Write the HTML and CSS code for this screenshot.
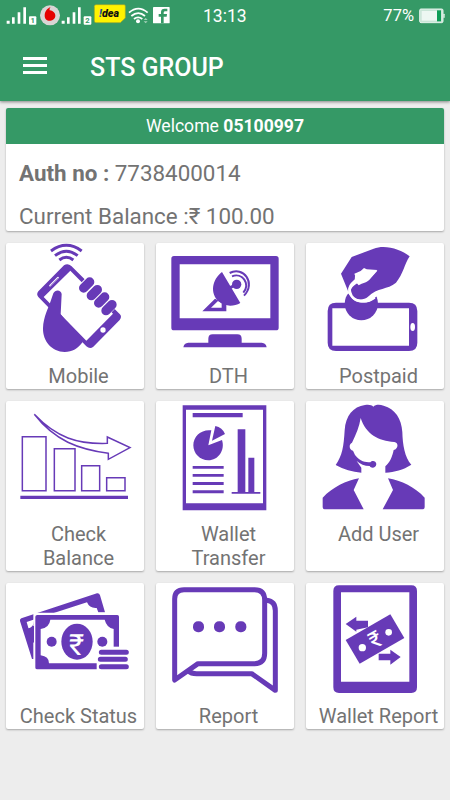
FILE: index.html
```html
<!DOCTYPE html>
<html lang="en">
<head>
  <meta charset="UTF-8">
  <meta name="viewport" content="width=device-width, initial-scale=1">
  <title>STS GROUP</title>
  <link rel="stylesheet" href="styles.css">
</head>
<body>
  <header class="header">
    <div class="status-bar">
      <svg class="status-icons" viewBox="0 0 540 96">
        <!-- sim 1 signal -->
        <g class="white">
          <path d="M20 62h9v9h-9zM36 52h8v19h-8zM53 37h8v34h-8zM70 22h8v49h-8z"/>
          <rect x="87" y="49" width="22" height="25" rx="3"/>
          <path d="M185 62h9v9h-9zM201 52h8v19h-8zM218 37h8v34h-8zM234 22h8v49h-8z"/>
          <rect x="251" y="49" width="23" height="25" rx="3"/>
        </g>
        <text class="sim" x="98" y="70">1</text>
        <text class="sim" x="262" y="70">2</text>
        <!-- operator badges -->
        <circle cx="150" cy="46" r="30" fill="#d9d5d5"/>
        <path d="M152 21c-3 3-4 6-3 10 12 2 18 9 17 18-1 8-8 14-17 13-9 0-15-6-15-15 0-13 9-23 18-26z" fill="#e60000"/>
        <path d="M288 14h84q4 0 4 4v36l-15 14h-73q-5 0-5-5v-44q0-5 5-5z" fill="#fff200" stroke="#9aa52d" stroke-width="2"/>
        <text class="operator" x="297" y="52" textLength="60" lengthAdjust="spacingAndGlyphs"><tspan fill="#1f4e9c">!</tspan>dea</text>
        <!-- wifi -->
        <g fill="none" stroke="#fff" stroke-width="5.5">
          <path d="M387 38q28-24 56 0M394 48q21-17 41 0M402 57q12-10 25 0"/>
        </g>
        <circle class="white" cx="414" cy="64" r="6"/>
        <path d="M431 60l6-6 6 6zM431 64l6 6 6-6z" fill="#a5d1b9"/>
        <!-- facebook -->
        <rect class="white" x="459" y="21" width="50" height="49" rx="2"/>
        <path d="M483 70V50h-7v-8h7v-6q0-10 11-10h8v8h-6q-5 0-5 4v4h10l-1 8h-9v20z" fill="#359966"/>
      </svg>
      <span class="time">13:13</span>
      <span class="battery-text">77%</span>
      <svg class="battery" viewBox="0 0 78 48">
        <rect x="2" y="3" width="70" height="41" rx="4" fill="#c9e5d7" stroke="#e4f3eb" stroke-width="3"/>
        <rect x="8" y="9" width="46" height="29" fill="#edf7f2"/>
        <rect x="54" y="7" width="12" height="33" fill="#0e9d57"/>
        <rect x="73" y="17" width="4" height="13" rx="2" fill="#e4f3eb"/>
      </svg>
    </div>
    <div class="toolbar">
      <button class="menu-button" aria-label="Menu"><span></span><span></span><span></span></button>
      <h1>STS GROUP</h1>
    </div>
  </header>

  <main>
    <section class="account card">
      <div class="welcome">Welcome <b>05100997</b></div>
      <p><b>Auth no :</b> 7738400014</p>
      <p>Current Balance :₹ 100.00</p>
    </section>

    <section class="menu">
      <a class="item card">
        <svg viewBox="18 14 414 345">
          <g class="line" stroke-width="9">
            <path d="M153 38q46-34 92 0M165 52q34-26 68 0M178 65q21-16 42 0"/>
          </g>
          <path fill-rule="evenodd" d="M192 81q11-7 22 2l145 144q8 8 0 18l-79 80q-10 9-21-1L115 176q-7-8 0-17zM211 97L131 176 259 307 339 226z"/>
          <circle class="white" cx="309" cy="275" r="8"/>
          <path d="M150 142l24-24" stroke="#fff" stroke-width="5" stroke-linecap="round"/>
          <path d="M151 142l23-23" stroke="#673ab7" stroke-width="1.5"/>
          <path d="M160 165c5-12 23-12 25 2l-3 61 66 83c-14 20-31 30-54 30-38 0-66-32-65-71 1-35 18-65 22-79z"/>
          <g stroke="#fff" stroke-width="33" stroke-linecap="round">
            <path d="M251 149l18-19M273 172l18-19M296 194l18-19M318 216l18-19"/>
          </g>
          <g stroke="#673ab7" stroke-width="28" stroke-linecap="round">
            <path d="M251 149l18-18M274 172l18-18M296 194l18-18M318 217l18-18"/>
          </g>
        </svg>
        <span>Mobile</span>
      </a>

      <a class="item card">
        <svg viewBox="18 14 414 345">
          <path fill-rule="evenodd" d="M72 53h306q8 0 8 8v207q0 8-8 8H72q-8 0-8-8V61q0-8 8-8zM89 78v162h272V78z"/>
          <path d="M100 327q2-13 15-14h60v-12q0-13 13-13h74q13 0 13 13v12h60q13 1 15 14z"/>
          <path d="M216 101c-31 23-36 65-10 88 19 17 45 16 65 5z"/>
          <circle cx="260" cy="138" r="14"/>
          <path d="M236 150l20-10" stroke="#673ab7" stroke-width="9"/>
          <path fill-rule="evenodd" d="M195 181l34 17v21h-72zM204 188l-21 20h32v-14z"/>
          <g class="line" stroke-width="6">
            <path d="M239 104c41-22 80 30 43 68M246 114c31-12 56 22 34 49"/>
          </g>
        </svg>
        <span>DTH</span>
      </a>

      <a class="item card">
        <svg viewBox="18 14 414 345">
          <path fill-rule="evenodd" d="M108 193h219q25 0 25 25v95q0 25-25 25H108q-25 0-25-25v-95q0-25 25-25zM97 210v112h230V210z"/>
          <ellipse class="white" cx="338" cy="266" rx="7" ry="12"/>
          <circle cx="184" cy="196" r="50"/>
          <path d="M123 140h120v26l-15 9c-18 23-62 24-75 0z" fill="#fff"/>
          <path d="M145 160L123 106l32-50 66-25c34-14 83 2 108 23-16 24-19 53-41 79-26 22-55 13-84 42-15 14-48 10-52-10-2-16 10-27 30-34 10-4 23-1 29-11l21-25-32-2-8-4-10 9-19 8 8 22c-17 8-28 15-26 32z"/>
          <path d="M192 91l8 4 32 2-24 27c-8 9-20 9-32 17l-12-14 1-14 20-9z" fill="#fff"/>
          <path d="M171 123c-23 17-27 29-17 49 13 21 48 22 70 5" fill="none" stroke="#fff" stroke-width="8"/>
        </svg>
        <span>Postpaid</span>
      </a>

      <a class="item card">
        <svg viewBox="18 14 414 345">
          <g class="line" stroke-width="4.5">
            <path d="M67 121h71v162H67zM163 157h62v126h-62zM245 208h54v75h-54zM320 244h55v39h-55z"/>
            <path d="M103 54c66 70 130 90 219 87v-19l68 32-65 35v-18c-90-13-160-37-222-117z"/>
          </g>
          <path d="M61 298h323v10H61z"/>
        </svg>
        <span>Check<br>Balance</span>
      </a>

      <a class="item card">
        <svg viewBox="18 14 414 345">
          <path fill-rule="evenodd" d="M98 27h251v315H98zM108 40v281h231V40z"/>
          <path d="M128 50h150v13H128zM128 209h93v8h-93zM128 233h93v8h-93zM128 257h93v9h-93zM128 282h93v9h-93zM263 99h23v189h-23zM295 184h18v104h-18zM245 287h86v5h-86z"/>
          <path d="M184 102c-29-4-54 17-54 45 0 25 20 45 45 45 30 0 51-31 41-61l-41 16z"/>
          <path d="M196 89q21 4 29 24l-39 20z"/>
        </svg>
        <span>Wallet<br>Transfer</span>
      </a>

      <a class="item card">
        <svg viewBox="18 14 414 345">
          <path d="M107 206c20-28 24-55 27-104 3-44 25-71 61-76 12-2 20 0 25 5 6-6 18-7 31-3 34 10 54 38 56 79 1 38 7 76 27 98-25 16-50 22-78 24v-19c14-12 21-29 25-49 15-3 15-23 2-24-48-3-85-23-101-72-4 26-13 48-26 74-10 4-9 21 3 24l6 13c16 20 31 22 46 22 4-6 17-6 18 5-1 13-16 14-20 6-15 0-29-6-39-15l14 20v15c-27-3-53-9-77-23z"/>
          <path d="M177 246c-38 7-79 26-109 58v29q0 6 6 6h117l-30-58zM264 246c40 7 81 26 110 58v29q0 6-6 6H248l31-58z"/>
        </svg>
        <span>Add User</span>
      </a>

      <a class="item card">
        <svg viewBox="18 14 414 345">
          <path fill-rule="evenodd" d="M64 120L291 45q7-1 9 6l15 51h-20l-5-13q-21 2-29-17L122 117 80 131l6 21 14-10v100h-4L60 128q-1-6 4-8z"/>
          <path d="M84 150q17-1 18-24v67q-7 0-9-14z"/>
          <path d="M100 103h254v40H100z" fill="#fff"/>
          <path fill-rule="evenodd" d="M112 110h240q5 0 5 5v153q0 5-5 5H112q-6 0-6-5V115q0-5 6-5zM151 124q-3 24-29 28v79q25 3 25 24h194V152q-21-4-27-28z"/>
          <path d="M290 205h74v73h-74z" fill="#fff"/>
          <circle cx="155" cy="190" r="15"/>
          <circle cx="307" cy="190" r="15"/>
          <ellipse cx="231" cy="190" rx="47" ry="54"/>
          <text class="rupee" x="230" y="229">₹</text>
          <g stroke="#673ab7" stroke-width="15" stroke-linecap="round">
            <path d="M304 222h75M301 243h75M304 265h75"/>
          </g>
        </svg>
        <span>Check Status</span>
      </a>

      <a class="item card">
        <svg viewBox="18 14 414 345">
          <g class="line" stroke-width="15" stroke-linejoin="round">
            <path d="M102 34h212q30 0 30 31v160q0 31-30 31H144l-70 49V62q0-28 28-28z"/>
            <path d="M350 66q26 3 26 31v239l-71-50H140q-17 0-24-8"/>
          </g>
          <rect x="129" y="129" width="33" height="33" rx="15"/>
          <rect x="192" y="129" width="33" height="33" rx="15"/>
          <rect x="256" y="129" width="33" height="33" rx="15"/>
        </svg>
        <span>Report</span>
      </a>

      <a class="item card">
        <svg viewBox="18 14 414 345">
          <path fill-rule="evenodd" d="M117 21h217q17 0 17 17v289q0 17-17 17H117q-17 0-17-17V38q0-17 17-17zM123 42v268h205V42z"/>
          <path d="M137 185l134-77 42 71-134 77z"/>
          <path d="M137 137l32-22v12h35v20l-35 7v6zM302 236l-31-22v12h-35v20h35v13z"/>
          <circle class="white" cx="187" cy="208" r="11"/>
          <circle class="white" cx="266" cy="162" r="10"/>
          <text class="rupee small" transform="translate(238 204) rotate(-30)">₹</text>
        </svg>
        <span>Wallet Report</span>
      </a>
    </section>
  </main>
</body>
</html>
```

FILE: styles.css
```css
* {
  box-sizing: border-box;
}
body {
  margin: 0;
  min-height: 800px;
  background-color: #ededed;
  color: #737373;
  font-family: Roboto, "Liberation Sans", sans-serif;
}
.header {
  height: 101px;
  background-color: #359966;
  color: #fff;
  box-shadow: 0 1px 3px rgba(0, 0, 0, 0.45);
}
.status-bar {
  display: flex;
  align-items: center;
  height: 32px;
}
.status-icons {
  width: 180px;
  height: 32px;
}
.time {
  margin-left: 23px;
  font-size: 17.5px;
}
.battery-text {
  margin-left: auto;
  margin-right: 5px;
  margin-top: -2px;
  font-size: 16.5px;
}
.battery {
  width: 26px;
  height: 16px;
  margin-right: 5px;
}
.toolbar {
  display: flex;
  align-items: center;
  height: 69px;
  padding: 2px 0 0 23px;
}
.menu-button {
  display: flex;
  flex-direction: column;
  gap: 4px;
  width: 24px;
  margin-top: -4px;
  padding: 0;
  border: none;
  background: none;
}
.menu-button span {
  width: 24px;
  height: 3px;
  background-color: #fff;
}
h1 {
  margin: 0 0 0 43px;
  font-size: 25px;
  font-weight: 500;
}
main {
  padding: 6.5px 6px 0;
}
.card {
  background-color: #fff;
  border-radius: 2px;
  box-shadow: 0 1px 2px rgba(0, 0, 0, 0.3);
}
.account {
  height: 123px;
  overflow: hidden;
}
.welcome {
  height: 36px;
  background-color: #359966;
  color: #fff;
  font-size: 17.6px;
  line-height: 37px;
  text-align: center;
}
.account p {
  margin: 0;
  padding-left: 13px;
  font-size: 22.4px;
  line-height: 27px;
}
.account p:nth-of-type(1) {
  margin: 16px 0;
}
.menu {
  display: grid;
  grid-template-columns: repeat(3, 138px);
  gap: 12px;
  margin-top: 12px;
}
.item {
  display: flex;
  flex-direction: column;
  padding-bottom: 7px;
  font-size: 20px;
  line-height: 24px;
  text-align: center;
}
.item svg {
  display: block;
  width: 138px;
  height: 115px;
  fill: #673ab7;
}
.item span {
  margin-top: 6px;
  margin-bottom: -6px;
  padding-left: 7px;
}
.item .line {
  fill: none;
  stroke: #673ab7;
}
.white {
  fill: #fff;
}
.sim {
  fill: #359966;
  font-size: 23px;
  font-weight: 700;
  text-anchor: middle;
}
.operator {
  fill: #111;
  font-size: 30px;
  font-style: italic;
  font-weight: 900;
}
.item .rupee {
  fill: #fff;
  font-size: 88px;
  font-weight: 400;
  text-anchor: middle;
}
.item .small {
  font-size: 68px;
}
```
